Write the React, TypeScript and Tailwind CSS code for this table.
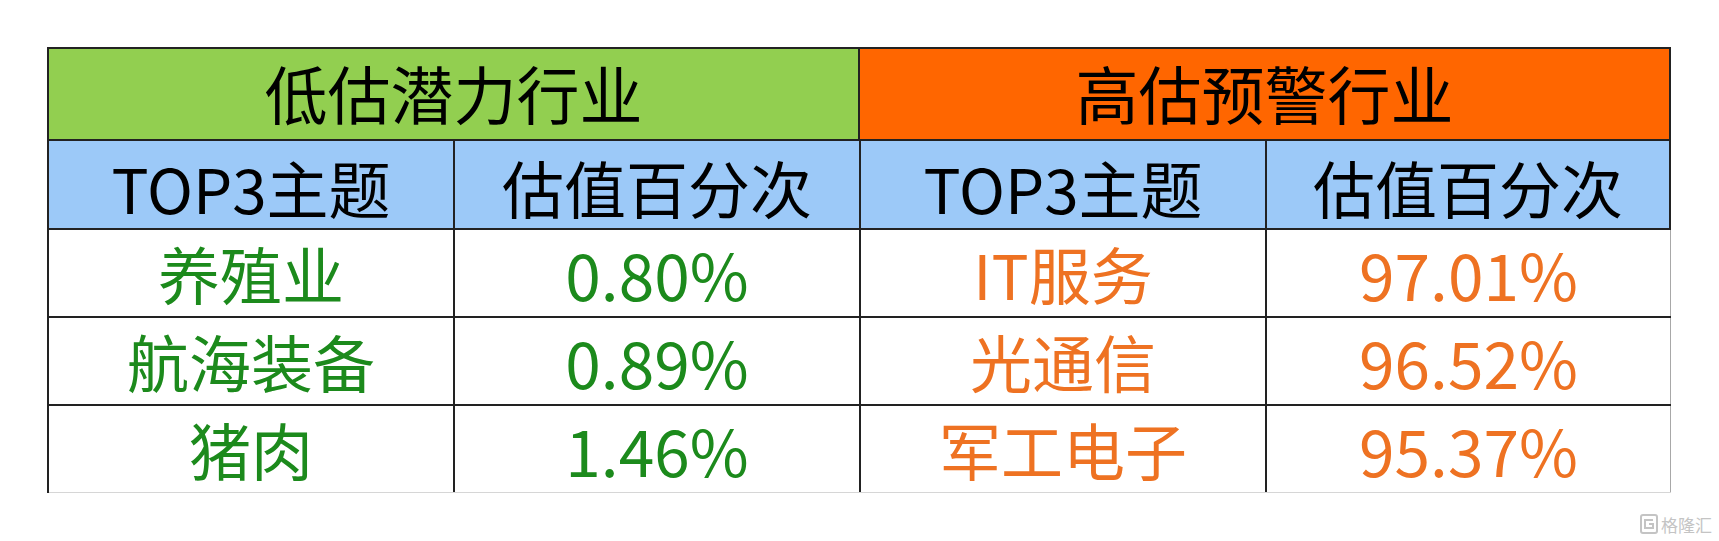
import React from "react";

const green = "text-[#1c8a1c]";
const orange = "text-[#ee7222]";

const rows = [
  ["养殖业", "0.80%", "IT服务", "97.01%"],
  ["航海装备", "0.89%", "光通信", "96.52%"],
  ["猪肉", "1.46%", "军工电子", "95.37%"],
];

export default function App() {
  return (
    <div
      className="w-[1719px] h-[541px] bg-white pl-[47px] pt-[47px] flex flex-col"
      style={{ fontFamily: '"Noto Sans CJK SC", "Noto Sans", sans-serif' }}
    >
      <div className="w-[1624px] flex flex-col border-t-2 border-l-2 border-[#222]">
        {/* Header row */}
        <div className="flex h-[92px] border-b-2 border-[#222]">
          <div className="w-[811px] bg-[#92cf50] border-r-2 border-[#222] flex items-center justify-center text-[63px] leading-none text-black pb-[6px]">
            低估潜力行业
          </div>
          <div className="flex-1 bg-[#ff6600] border-r-2 border-[#222] flex items-center justify-center text-[63px] leading-none text-black pb-[6px]">
            高估预警行业
          </div>
        </div>
        {/* Subheader */}
        <div className="flex h-[89px] border-b-2 border-[#222] bg-[#9cc9f8] text-black text-[62px] leading-none">
          <div className="w-[406px] border-r-2 border-[#222] flex items-center justify-center pt-[4px]">TOP3主题</div>
          <div className="w-[406px] border-r-2 border-[#222] flex items-center justify-center pt-[4px]">估值百分次</div>
          <div className="w-[406px] border-r-2 border-[#222] flex items-center justify-center pt-[4px]">TOP3主题</div>
          <div className="flex-1 border-r-2 border-[#222] flex items-center justify-center pt-[4px]">估值百分次</div>
        </div>
        {rows.map((r, i) => (
          <div
            key={i}
            className={
              "flex text-[62px] leading-none " +
              (i < 2 ? "h-[88px] border-b-2 border-[#222]" : "h-[87px] border-b border-[#d6d6d6]")
            }
          >
            <div className={"w-[406px] border-r-2 border-[#222] flex items-center justify-center " + green}>{r[0]}</div>
            <div className={"w-[406px] border-r-2 border-[#222] flex items-center justify-center text-[64px] " + green}>{r[1]}</div>
            <div className={"w-[406px] border-r-2 border-[#222] flex items-center justify-center " + orange}>{r[2]}</div>
            <div className={"flex-1 border-r border-[#a8a8a8] flex items-center justify-center text-[64px] " + orange}>{r[3]}</div>
          </div>
        ))}
      </div>
      <div className="w-[1665px] flex justify-end items-center gap-[3px] mt-[21px] text-[#c4c4c4]">
        <svg width="18" height="20" viewBox="0 0 18 20" fill="none">
          <rect x="1" y="1" width="16" height="18" rx="2" stroke="#c4c4c4" strokeWidth="2" />
          <path d="M13 6 H5 V14 H13 V10 H9" stroke="#c4c4c4" strokeWidth="2" fill="none" />
        </svg>
        <span className="text-[17px] leading-none">格隆汇</span>
      </div>
    </div>
  );
}
